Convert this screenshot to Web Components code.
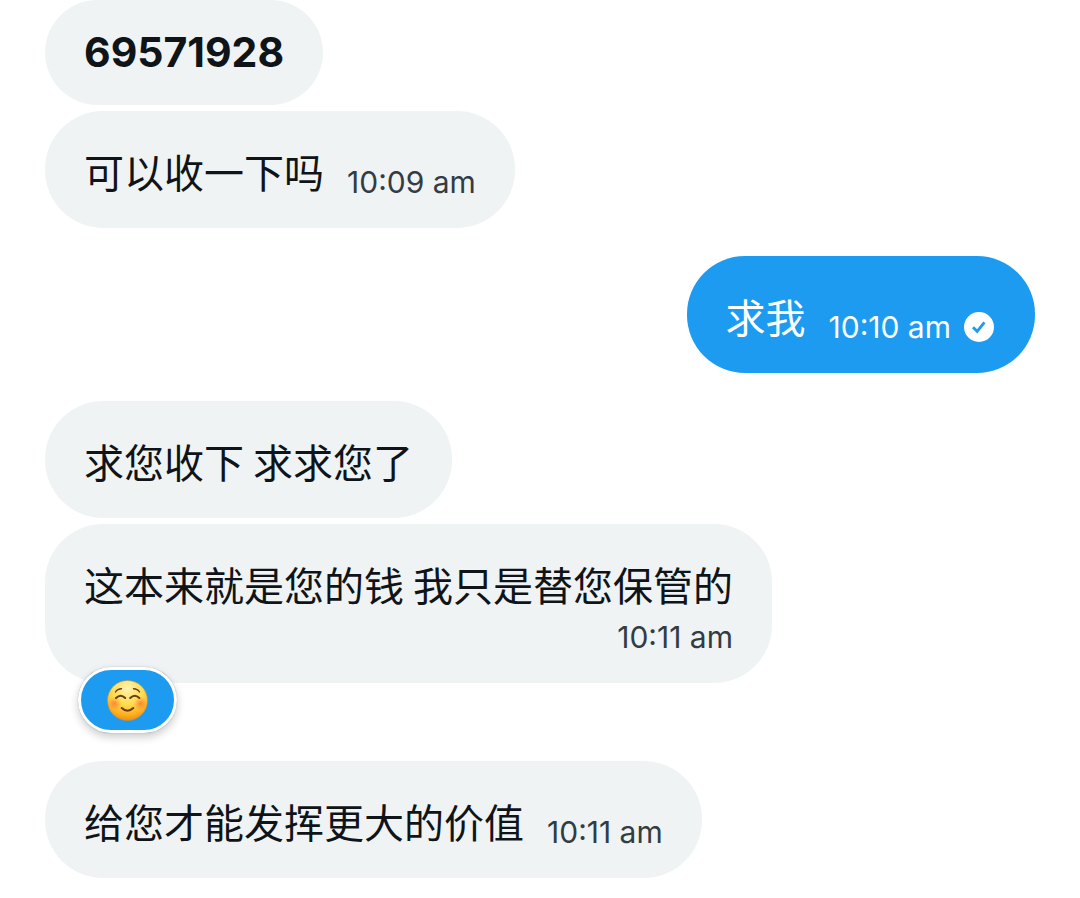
<!DOCTYPE html>
<html lang="zh-CN">
<head>
  <meta charset="UTF-8">
  <meta name="viewport" content="width=device-width, initial-scale=1.0">
  <title>Mensajes</title>
  <style>
    body {
      margin: 0;
      background: #ffffff;
      color: #0f1419;
      font-family: Inter, "Noto Sans CJK SC", sans-serif;
    }
  </style>
</head>
<body>
  <chat-thread>
    <message-group>
      <chat-bubble variant="number">69571928</chat-bubble>
      <chat-bubble time="10:09 am">可以收一下吗</chat-bubble>
    </message-group>
    <message-group>
      <chat-bubble variant="sent" time="10:10 am">求我</chat-bubble>
    </message-group>
    <message-group>
      <chat-bubble>求您收下 求求您了</chat-bubble>
      <chat-bubble variant="stacked" time="10:11 am">这本来就是您的钱 我只是替您保管的<chat-reaction slot="reaction"></chat-reaction></chat-bubble>
    </message-group>
    <message-group>
      <chat-bubble time="10:11 am">给您才能发挥更大的价值</chat-bubble>
    </message-group>
  </chat-thread>

  <script>
    class ChatThread extends HTMLElement {
      constructor() {
        super();
        const shadow = this.attachShadow({ mode: "open" });

        shadow.innerHTML = `
          <style>
            :host {
              display: block;
            }

            main {
              display: flex;
              flex-direction: column;
              gap: 28px;
              padding: 0 45px 20px;
            }
          </style>

          <main>
            <slot></slot>
          </main>
        `;
      }
    }

    class MessageGroup extends HTMLElement {
      constructor() {
        super();
        const shadow = this.attachShadow({ mode: "open" });

        shadow.innerHTML = `
          <style>
            :host {
              display: flex;
              flex-direction: column;
              align-items: flex-start;
              gap: 6px;
            }
          </style>

          <slot></slot>
        `;
      }
    }

    class ChatBubble extends HTMLElement {
      constructor() {
        super();
        const shadow = this.attachShadow({ mode: "open" });

        const time = this.getAttribute("time");
        const sent = this.getAttribute("variant") === "sent";

        const check = `
          <svg viewBox="0 0 30 30" role="img" aria-label="Enviado">
            <circle cx="15" cy="15" r="15" fill="#ffffff"/>
            <path d="M9 15.2l4.2 4.1 7.2-9" fill="none" stroke="#1d9bf0" stroke-width="2.8"/>
          </svg>
        `;

        shadow.innerHTML = `
          <style>
            :host {
              display: block;
              position: relative;
              max-width: 100%;
            }

            :host([variant="sent"]) {
              align-self: flex-end;
            }

            /* room for the reaction that hangs under the bubble */
            :host([variant="stacked"]) {
              margin-bottom: 50px;
            }

            .bubble {
              display: flex;
              align-items: flex-end;
              column-gap: 23px;
              padding: 35px 39px 25px;
              border-radius: 58px;
              background: #eff3f4;
            }

            .text {
              margin: 0;
              padding-bottom: 6px;
              font-family: "Noto Sans CJK SC", sans-serif;
              font-size: 40px;
              line-height: 51px;
            }

            .meta {
              display: flex;
              flex-shrink: 0;
              align-items: center;
              gap: 13px;
              color: #333c43;
              font-size: 30px;
              line-height: 42px;
            }

            svg {
              display: block;
              width: 30px;
              height: 30px;
            }

            :host([variant="number"]) .bubble {
              padding: 26px 39px;
            }

            :host([variant="number"]) .text {
              padding: 0;
              font-family: Inter, sans-serif;
              font-size: 41px;
              line-height: 53px;
              font-weight: 700;
            }

            :host([variant="stacked"]) .bubble {
              flex-direction: column;
            }

            :host([variant="sent"]) .bubble {
              padding-right: 41px;
              background: #1d9bf0;
            }

            :host([variant="sent"]) .text,
            :host([variant="sent"]) .meta {
              color: #ffffff;
            }
          </style>

          <div class="bubble">
            <p class="text"><slot></slot></p>
            ${time ? `<div class="meta"><time>${time}</time>${sent ? check : ""}</div>` : ""}
          </div>
          <slot name="reaction"></slot>
        `;
      }
    }

    class ChatReaction extends HTMLElement {
      constructor() {
        super();
        const shadow = this.attachShadow({ mode: "open" });

        shadow.innerHTML = `
          <style>
            :host {
              display: block;
              position: absolute;
              left: 33px;
              bottom: -50px;
            }

            button {
              display: flex;
              align-items: center;
              justify-content: center;
              box-sizing: border-box;
              width: 99px;
              height: 66px;
              padding: 0;
              border: 3px solid #ffffff;
              border-radius: 33px;
              background: #1d9bf0;
              box-shadow: 0 0 1px rgba(15, 20, 25, 0.4), 0 4px 8px rgba(15, 20, 25, 0.22);
              cursor: pointer;
            }

            svg {
              display: block;
              width: 42px;
              height: 42px;
            }
          </style>

          <button type="button" aria-label="Sonrisa">
            <svg viewBox="0 0 42 42" aria-hidden="true">
              <defs>
                <radialGradient id="face" cx="0.5" cy="0.2" r="0.82">
                  <stop offset="0" stop-color="#fff3b0"/>
                  <stop offset="0.5" stop-color="#ffdb4d"/>
                  <stop offset="0.8" stop-color="#fdb022"/>
                  <stop offset="1" stop-color="#ee8a0c"/>
                </radialGradient>
                <radialGradient id="cheek">
                  <stop offset="0" stop-color="#ff5c36" stop-opacity="0.65"/>
                  <stop offset="1" stop-color="#ff7a30" stop-opacity="0"/>
                </radialGradient>
              </defs>
              <circle cx="20.5" cy="21.5" r="20" fill="url(#face)" stroke="#c98f35" stroke-width="0.6"/>
              <circle cx="7.5" cy="24.5" r="7" fill="url(#cheek)"/>
              <circle cx="33.5" cy="24.5" r="7" fill="url(#cheek)"/>
              <g fill="none" stroke="#6b3b10" stroke-linecap="round">
                <path d="M8.5 13q2-3.2 6-3.2M26.5 9.8q4 0 6 3.2" stroke-width="1.4"/>
                <path d="M9 19q4.7-4.4 9.2 0M23.2 19q4.5-4.4 9.2 0" stroke-width="2"/>
                <path d="M14.7 29q5.8 5.4 11.6 0" stroke-width="2"/>
              </g>
            </svg>
          </button>
        `;
      }
    }

    customElements.define("chat-thread", ChatThread);
    customElements.define("message-group", MessageGroup);
    customElements.define("chat-bubble", ChatBubble);
    customElements.define("chat-reaction", ChatReaction);
  </script>
</body>
</html>
